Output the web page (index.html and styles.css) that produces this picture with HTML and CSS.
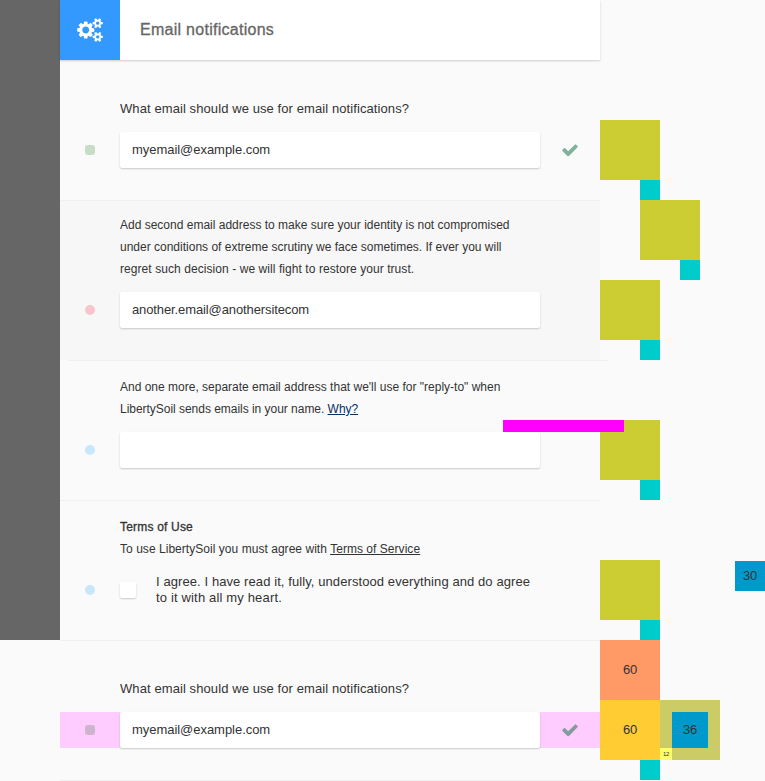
FILE: index.html
```
<!DOCTYPE html>
<html lang="en">
<head>
<meta charset="utf-8">
<title>Email notifications</title>
<link rel="stylesheet" href="styles.css">
</head>
<body>
<div class="page">
  <aside class="sidebar"></aside>
  <main class="panel">
    <header class="header">
      <div class="header-icon">
        <svg class="cogs" viewBox="0 0 1920 1792"><path d="M896 896q0-106-75-181t-181-75-181 75-75 181 75 181 181 75 181-75 75-181zm768 512q0-52-38-90t-90-38-90 38-38 90q0 53 37.500 90.500t90.500 37.500 90.500-37.500 37.500-90.500zm0-1024q0-52-38-90t-90-38-90 38-38 90q0 53 37.500 90.500t90.500 37.500 90.500-37.500 37.500-90.500zm-384 421v185q0 10-7 19.500t-16 10.500l-155 24q-11 35-32 76 34 48 90 115 7 11 7 20 0 12-7 19-23 30-82.500 89.500t-78.500 59.500q-11 0-21-7l-115-90q-37 19-77 31-11 108-23 155-7 24-30 24h-186q-11 0-20-7.500t-10-17.500l-23-153q-34-10-75-31l-118 89q-7 7-20 7-11 0-21-8-144-133-144-160 0-9 7-19 10-14 41-53t47-61q-23-44-35-82l-152-24q-10-1-17-9.500t-7-19.500v-185q0-10 7-19.500t16-10.500l155-24q11-35 32-76-34-48-90-115-7-11-7-20 0-12 7-20 22-30 82-89t79-59q11 0 21 7l115 90q34-18 77-32 11-108 23-154 7-24 30-24h186q11 0 20 7.500t10 17.500l23 153q34 10 75 31l118-89q8-7 20-7 11 0 21 8 144 133 144 160 0 8-7 19-12 16-42 54t-45 60q23 48 34 82l152 23q10 2 17 10.500t7 19.500zm640 533v140q0 16-149 31-12 27-30 52 51 113 51 138 0 4-4 7-122 71-124 71-8 0-46-47t-52-68q-20 2-30 2t-30-2q-14 21-52 68t-46 47q-2 0-124-71-4-3-4-7 0-25 51-138-18-25-30-52-149-15-149-31v-140q0-16 149-31 13-29 30-52-51-113-51-138 0-4 4-7 4-2 35-20t59-34 30-16q8 0 46 46.500t52 67.500q20-2 30-2t30 2q51-71 92-112l6-2q4 0 124 70 4 3 4 7 0 25-51 138 17 23 30 52 149 15 149 31zm0-1024v140q0 16-149 31-12 27-30 52 51 113 51 138 0 4-4 7-122 71-124 71-8 0-46-47t-52-68q-20 2-30 2t-30-2q-14 21-52 68t-46 47q-2 0-124-71-4-3-4-7 0-25 51-138-18-25-30-52-149-15-149-31v-140q0-16 149-31 13-29 30-52-51-113-51-138 0-4 4-7 4-2 35-20t59-34 30-16q8 0 46 46.500t52 67.500q20-2 30-2t30 2q51-71 92-112l6-2q4 0 124 70 4 3 4 7 0 25-51 138 17 23 30 52 149 15 149 31z"/></svg>
      </div>
      <h1 class="title">Email notifications</h1>
    </header>

    <section class="row row-first">
      <p class="label">What email should we use for email notifications?</p>
      <div class="line">
        <i class="dot dot-square"></i>
        <div class="field">myemail@example.com</div>
        <svg class="check" viewBox="0 0 1792 1792"><path d="M1671 566q0 40-28 68l-724 724-136 136q-28 28-68 28t-68-28l-136-136-362-362q-28-28-28-68t28-68l136-136q28-28 68-28t68 28l294 295 656-657q28-28 68-28t68 28l136 136q28 28 28 68z"/></svg>
      </div>
    </section>

    <section class="row row-tall">
      <p class="note">Add second email address to make sure your identity is not compromised<br>under conditions of extreme scrutiny we face sometimes. If ever you will<br><span class="wide">regret such decision - we will fight to restore your trust.</span></p>
      <div class="line">
        <i class="dot dot-red"></i>
        <div class="field field-tight">another.email@anothersitecom</div>
      </div>
    </section>

    <section class="row row-shifted">
      <p class="note">And one more, separate email address that we'll use for "reply-to" when<br><span class="tight">LibertySoil sends emails in your name. <a class="link-blue">Why?</a></span></p>
      <div class="line">
        <i class="dot dot-blue"></i>
        <div class="field"></div>
      </div>
    </section>

    <section class="row row-terms">
      <p class="note"><b class="strong">Terms of Use</b><br><span class="terms-line">To use LibertySoil you must agree with <a class="link">Terms of Service</a></span></p>
      <div class="line">
        <i class="dot dot-blue"></i>
        <div class="agree">
          <i class="checkbox"></i>
          <p class="agree-text">I agree. I have read it, fully, understood everything and do agree<br><span class="agree-end">to it with all my heart.</span></p>
        </div>
      </div>
    </section>

    <section class="row">
      <p class="label">What email should we use for email notifications?</p>
      <div class="line line-pink">
        <i class="dot dot-square"></i>
        <div class="field">myemail@example.com</div>
        <svg class="check" viewBox="0 0 1792 1792"><path d="M1671 566q0 40-28 68l-724 724-136 136q-28 28-68 28t-68-28l-136-136-362-362q-28-28-28-68t28-68l136-136q28-28 68-28t68 28l294 295 656-657q28-28 68-28t68 28l136 136q28 28 28 68z"/></svg>
      </div>
    </section>
    <div class="row-end"></div>
  </main>

  <div class="rail">
    <div class="step"></div>
    <div class="step step-right"></div>
    <div class="step"></div>
    <div class="step step-gap"></div>
    <div class="step step-gap"></div>
    <div class="block block-orange">60</div>
    <div class="blocks">
      <div class="block block-yellow">60</div>
      <div class="block block-olive">
        <div class="block-36">36</div>
        <div class="block-12">12</div>
      </div>
    </div>
    <div class="tail"></div>
  </div>

  <div class="bar"></div>
  <div class="block-30">30</div>
</div>
</body>
</html>
```

FILE: styles.css
```
* { box-sizing: border-box; }
body {
  margin: 0;
  background: #fafafa;
  color: #333;
  font: 13px/22px "Liberation Sans", Arial, sans-serif;
}
h1, p { margin: 0; font-weight: normal; }

.page {
  position: relative;
  display: grid;
  grid-template-columns: 60px 540px 165px;
  height: 781px;
  overflow: hidden;
}
.sidebar { height: 640px; background: #666; }

.header {
  display: flex;
  height: 60px;
  background: #fff;
  box-shadow: 0 1px 2px rgba(0, 0, 0, .18);
}
.header-icon {
  display: flex;
  align-items: center;
  justify-content: center;
  width: 60px;
  background: #39f;
}
.cogs { width: 26px; height: 24px; fill: #fff; }
.title {
  padding-left: 20px;
  font-size: 16px;
  line-height: 60px;
  letter-spacing: .27px;
  color: #666;
  -webkit-text-stroke: .3px #666;
}

.row {
  position: relative;
  display: flex;
  flex-direction: column;
  justify-content: flex-end;
  gap: 12px;
  height: 140px;
  padding-bottom: 32px;
  border-top: 1px solid #f0f0f0;
}
.row-first { border-top: 0; }
.row-tall { height: 160px; background: #f7f7f7; }
.row-shifted { border-top: 0; }
.row-shifted::before {
  content: "";
  position: absolute;
  top: 0;
  left: 8px;
  width: 540px;
  height: 1px;
  background: #f0f0f0;
}
.row-terms { gap: 14px; padding-bottom: 34px; }
.row-end { height: 1px; background: #f0f0f0; }

.label, .note { padding-left: 60px; }
.label { letter-spacing: .09px; }
.note { font-size: 12px; }
.wide { letter-spacing: .07px; }
.tight { letter-spacing: -.03px; }
.terms-line { letter-spacing: .04px; }
.strong {
  font-weight: normal;
  letter-spacing: .19px;
  -webkit-text-stroke: .3px #333;
}
.link { text-decoration: underline; }
.link-blue { color: #036; text-decoration: underline; }

.line {
  display: grid;
  grid-template-columns: 60px 420px 60px;
  align-items: center;
  justify-items: center;
}
.line-pink { background: #fcf; }
.field {
  width: 420px;
  height: 36px;
  padding-left: 12px;
  line-height: 36px;
  letter-spacing: -.04px;
  background: #fff;
  border-radius: 2px;
  box-shadow: 0 1px 2px rgba(0, 0, 0, .2);
}
.field-tight { letter-spacing: -.11px; }
.dot { width: 10px; height: 10px; border-radius: 50%; }
.dot-square { border-radius: 3px; background: #c8dcc8; }
.line-pink .dot-square { background: #ccb4cc; }
.dot-red { background: #f9c4cc; }
.dot-blue { background: #c8e6fc; }
.check { width: 18px; height: 18px; fill: #80b29b; }
.line-pink .check { fill: #849c9c; }

.agree { display: flex; align-items: center; gap: 20px; width: 420px; }
.checkbox {
  width: 16px;
  height: 16px;
  background: #fff;
  border-radius: 2px;
  box-shadow: 0 1px 2px rgba(0, 0, 0, .2);
}
.agree-text { line-height: 16px; letter-spacing: .087px; white-space: nowrap; }
.agree-end { letter-spacing: .16px; }

.rail { padding-top: 120px; }
.step {
  display: flex;
  flex-direction: column;
  align-items: flex-end;
  width: 60px;
}
.step::before { content: ""; width: 60px; height: 60px; background: #cc3; }
.step::after { content: ""; width: 20px; height: 20px; background: #0cc; }
.step-right { margin-left: 40px; }
.step-gap { margin-top: 60px; }
.blocks { display: flex; }
.block { width: 60px; height: 60px; line-height: 60px; text-align: center; letter-spacing: -.3px; }
.block-orange { background: #f96; }
.block-yellow { background: #fc3; }
.block-olive {
  display: grid;
  grid-template: 12px 36px 12px / 12px 36px 12px;
  background: #cc6;
}
.block-36 { grid-area: 2 / 2; line-height: 36px; background: #09c; }
.block-12 { grid-area: 3 / 1; font-size: 6px; line-height: 12px; background: #ff6; }
.tail { width: 20px; height: 20px; margin-left: 40px; background: #0cc; }

/* Overlay markers */
.bar {
  position: absolute;
  left: 503px;
  top: 420px;
  width: 121px;
  height: 12px;
  background: #f0f;
}
.block-30 {
  position: absolute;
  left: 735px;
  top: 561px;
  width: 30px;
  height: 30px;
  line-height: 30px;
  text-align: center;
  letter-spacing: -.3px;
  background: #09c;
}
```
